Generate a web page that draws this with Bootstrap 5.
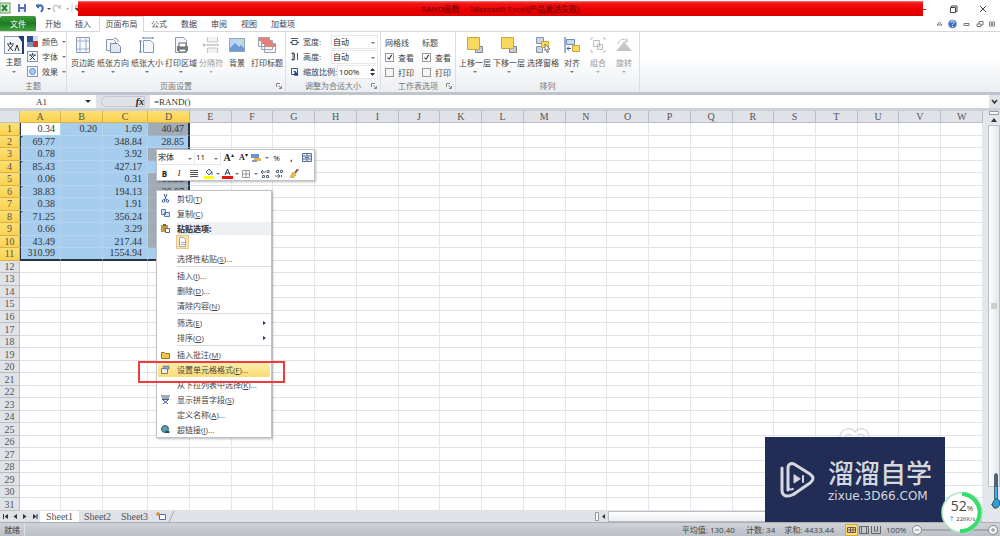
<!DOCTYPE html>
<html lang="zh-CN">
<head>
<meta charset="utf-8">
<meta name="viewport" content="width=device-width, initial-scale=1">
<title>RAND函数 - Microsoft Excel</title>
<link href="https://cdn.jsdelivr.net/npm/bootstrap@5.3.0/dist/css/bootstrap.min.css" rel="stylesheet">
<style>
:root{--ui:"Open Sans","Noto Sans CJK SC",sans-serif;--cell:"Liberation Serif","Noto Sans CJK SC",serif}
body{font-family:var(--ui);font-size:8px;line-height:12px;color:#444;background:#fff;overflow:hidden}
button,input,select{font:inherit;color:inherit;padding:0;border:0;background:none;border-radius:0}
button{line-height:inherit}
svg{display:block;flex:none}
a{color:inherit;text-decoration:none}
.titlebar{height:16px}
.qat{width:78px}
.redbar{background:linear-gradient(#f77 0,#f01818 2px,#e00 8px,#da0000);color:#600;margin:1px 0 0;line-height:15px}
.wincontrols{width:77px}
.tabs{height:16px;border-bottom:1px solid #d5d8dc}
.tabs a{display:block;width:30px;text-align:center;line-height:15px}
.tabs .file{width:36px;background:linear-gradient(#3f9b3c,#1d7a23 50%,#46a53a);color:#fff;border-radius:2px 2px 0 0;margin-right:2px}
.tabs .current{width:45px;height:16px;margin-left:1px;background:#fff;border:1px solid #d5d8dc;border-bottom:0;line-height:14px}
.tabs .wide{width:38px}
.ribbon{height:60px;background:linear-gradient(#fff 40%,#eceef2);border-bottom:0}
.group{border-right:1px solid #dcdfe3;display:flex;flex-direction:column}
.group-body{display:flex;height:48px;padding-top:5px}
.group-name{position:relative;text-align:center;color:#777;line-height:12px}
.group-name svg{position:absolute;right:3px;top:3px}
.big{display:flex;flex-direction:column;align-items:center;white-space:nowrap}
.big span{line-height:11px;margin-top:4px}
.caret{width:0;height:0;border:2px solid transparent;border-top-color:#777;border-bottom:0;margin-top:3px}
.w24{width:24px}.w26{width:26px}.w34{width:34px}.w28{width:28px}
.off{opacity:.55}
.line{display:flex;align-items:center;height:15px;white-space:nowrap}
.pick{width:47px;height:14px;background:#fff;border:1px solid #e6e8eb;padding:0 1px;appearance:none;line-height:12px;color:#222}
.pickbox{position:relative}
.pickbox .caret{position:absolute;right:3px;top:3px}
.tick{appearance:none;width:9px;height:9px;border:1px solid #999;background:#f4f4f4;margin:0 4px 0 0}
.tick:checked{background:#fff url("data:image/svg+xml,%3Csvg xmlns='http://www.w3.org/2000/svg' viewBox='0 0 8 8'%3E%3Cpath d='M1.5 4l2 2 3-5' fill='none' stroke='%23334' stroke-width='1.2'/%3E%3C/svg%3E")}
.formulabar{height:19px;background:#dfe2e7;border-top:3px solid #bfc3cb;border-bottom:3px solid #cdd1d7;font-family:var(--cell);font-size:9px;color:#333}
.namebox{width:96px;background:#fff;position:relative}
.namebox input{width:83px;text-align:center;height:13px}
.namebox .caret{position:absolute;right:5px;top:2px;border-width:3px;border-bottom:0;border-top-color:#333}
.fx{width:54px;background:#dfe2e7;padding-right:5px}
.fx span{width:44px;height:11px;border:1px solid #c4c8ce;border-radius:6px 0 0 6px;font-family:"Liberation Serif",serif;font-style:italic;font-weight:700;font-size:10px;line-height:9px;text-align:right;color:#222}
.fx-input{flex:1;background:#fff}
.sheetarea{min-height:0}
.gridbox{min-width:0}
.grid{table-layout:fixed;width:100%;height:100%;border-collapse:separate;border-spacing:0;font-family:var(--cell);font-size:10px;color:#333}
.grid th,.grid td{padding:0;line-height:11px;font-weight:400;border-right:1px solid #e4e6e9;border-bottom:1px solid #e0e3e6}
.grid td{text-align:right;padding-right:5px;overflow:hidden;position:relative}
.grid th{text-align:center;background:#dfe2e7;border-color:#b9bdc4;color:#555}
.grid thead th{height:12px}
.grid th.hot{background:linear-gradient(#fcdf74,#fbd24e);border-color:#d9b04a}
.grid td.sel{background:#a6cdee;border-color:#b4d3ee}
.grid td.dup{background:#9fabb7;border-color:#a9b4bf}
.grid td.act{background:#fff}
.grid td.edge-r{border-right:2px solid #24344a;padding-right:4px}
.grid td.edge-b{border-bottom:2px solid #24344a;line-height:10px}
.grid td.edge-l{border-left:1px solid #24344a}
.grid td.err::before{content:"";position:absolute;left:0;top:0;border:1px solid;border-color:#2b6b4b transparent transparent #2b6b4b}
.vscroll{width:18px;background:#e3e6ea;padding-left:5px}
.vscroll .thumb{background:linear-gradient(90deg,#fdfdfd,#e4e7eb);border:1px solid #b9bdc4;border-radius:1px}
.sheettabs{height:11px;background:#dfe2e7;font-family:var(--cell);font-size:10px;line-height:11px}
.sheettabs a{width:37px;text-align:center;color:#555}
.sheettabs .on{background:#fff;width:39px}
.nav4{width:40px}
.hscroll{width:406px}
.hscroll .track{background:linear-gradient(#fff,#eceef1);border:1px solid #b9bdc4}
.status{height:14px;background:linear-gradient(#d0d4d9,#bbbfc6);border-top:1px solid #a9adb4;color:#444;line-height:13px}
.status .viewon{background:#fbdc7c;border:1px solid #d9a93a}
.float{position:absolute;background:#fff;border:1px solid #bfc3c8;box-shadow:1px 1px 2px #0004}
.minibar{left:156px;top:149px;width:159px;height:32px;color:#222}
.minibar .rowline{display:flex;align-items:center;height:15px}
.minibar button{flex:1;display:flex;justify-content:center;align-items:center}
.fontname{width:38px}.fontsize{width:26px}
.minibar .pick{width:100%;border-width:0 1px 1px 0}
.ctx{left:156px;top:190px;width:116px;font-size:8px;line-height:15px}
.ctx a,.ctx .cap{display:flex;align-items:center;height:15px;padding-left:2px}
.ctx .ico{width:18px;display:flex;padding-left:2px}
.ctx .cap{height:14px;font-weight:700}
.ctx .cap b{flex:1;background:#eef0f3;line-height:13px}
.ctx .pasteopt{height:16px;padding-left:19px}
.ctx .pasteopt button{width:13px;height:14px;background:#f8e4b6;border:1px solid #e8c98a;display:flex;align-items:center;justify-content:center}
.ctx hr{margin:0 0 1px 20px;border-top:1px solid #d8dbdf;opacity:1}
.ctx .hover{background:linear-gradient(#fdeeb0,#f9dc74);margin:0 1px;padding-left:1px;border-radius:1px}
.ctx .sub::after{content:"";border:2px solid transparent;border-left:3px solid #223a70;margin-left:auto;margin-right:3px}
.callout{position:absolute;left:138px;top:361px;width:147px;height:22px;border:2px solid #ee3b3b}
.brand{position:absolute;right:55px;bottom:14px;width:180px;height:85px;background:#222d55;color:#d5d8de;gap:9px;padding-left:15px}
.brand .cn{font-size:26px;line-height:32px;font-weight:500}
.brand .en{font-family:"DejaVu Sans",sans-serif;font-size:12px;line-height:14px}
.bunny{position:absolute;right:126px;bottom:99px}
.gauge{position:absolute;right:13px;bottom:0;width:47px;height:47px}
.gauge p{position:absolute;left:4px;top:9px;width:36px;text-align:center;font-size:14px;line-height:16px;color:#444;margin:0}
.gauge small{font-size:8px}
.gauge em{position:absolute;left:4px;top:26px;width:36px;text-align:center;font-style:normal;font-size:6px;line-height:8px;white-space:nowrap}
.thermo{position:absolute;right:0;bottom:26px}
</style>
</head>
<body>
<div class="d-flex flex-column vh-100 position-relative">

  <header class="titlebar d-flex">
    <div class="qat d-flex align-items-center">
      <svg width="12" height="12" viewBox="0 0 12 12"><rect x="0" y="1" width="10" height="10" fill="#dff0dc" stroke="#5a9a58"/><path d="M2 3l5 6M7 3L2 9" stroke="#2c8a2e" stroke-width="2"/></svg>
      <svg class="ms-1 me-2" width="12" height="12" viewBox="0 0 12 12"><path d="M2 2h8v8H2z" fill="#5b6fc0"/><path d="M4 2h4v3H4z" fill="#fff"/><path d="M4 7h4v3H4z" fill="#dfe6f8"/></svg>
      <svg width="44" height="12" viewBox="0 0 44 12"><path d="M1 5c4-4 8 0 4 5" fill="none" stroke="#3f64b8" stroke-width="2"/><path d="M-1 3l4-1v5z" fill="#3f64b8"/><path d="M11 6h4l-2 2z" fill="#555"/><path d="M23 5c-4-4-8 0-4 5" fill="none" stroke="#c5c8cc" stroke-width="1.5"/><path d="M25 2v5l-4-1z" fill="#c5c8cc"/><path d="M30 6h3l-1 2z" fill="#aaa"/><path d="M36 1v10" stroke="#d0d0d0"/><path d="M39 4h5M39 6h5l-2.500 3z" stroke="#444" stroke-width=".6" fill="#444"/></svg>
    </div>
    <div class="redbar flex-grow-1 text-center">RAND函数&nbsp; - &nbsp;Microsoft Excel(产品激活失败)</div>
    <div class="wincontrols d-flex align-items-center">
      <svg width="77" height="16" viewBox="0 0 77 16" fill="none" stroke="#444"><path d="M0 9.500h3"/><path d="M27.500 7.500h5v5h-5zM28.500 7V6h5.500v5.500h-1"/><path d="M57 6l6 6M63 6l-6 6"/></svg>
    </div>
  </header>

  <nav class="tabs d-flex">
    <a href="#" class="file">文件</a><a href="#">开始</a><a href="#">插入</a><a href="#" class="current">页面布局</a><a href="#">公式</a><a href="#">数据</a><a href="#">审阅</a><a href="#">视图</a><a href="#" class="wide">加载项</a>
    <svg class="ms-auto me-1" width="62" height="14" viewBox="0 0 62 14" fill="none" stroke="#777"><path d="M3 9l2.500-3L8 9z"/><circle cx="18.500" cy="8" r="4" fill="#3d6fc4" stroke="#7d9bd0"/><path d="M17 6.500c0-2 3-2 3 0 0 1-1.500 1-1.500 2.200M18.500 10v1" stroke="#fff"/><path d="M30 7.500h5v2h-5zM43 8h4v2.500h-4zM45 8V5.500h4V9h-2M55.500 6h5v4h-5zM57 7l2 2m0-2l-2 2"/></svg>
  </nav>

  <section class="ribbon d-flex">
    <div class="group" style="width:67px">
      <div class="group-body" style="padding-top:2px">
        <button class="big" style="width:28px;padding-left:2px"><svg width="22" height="22" viewBox="0 0 22 20"><rect x="1.500" y="1.500" width="18" height="17" fill="#f3f6fa" stroke="#8d9ab0"/><path d="M15 1h6v18h-2V7z" fill="#243a78"/><path d="M4 9h7M7.500 7v2M5 16l5-6M5 10l5 6M12 16l2-6 2 6" stroke="#333" fill="none"/></svg><span class="mt-0">主题</span><i class="caret mt-1"></i></button>
        <div style="padding-left:2px">
          <button class="line"><svg class="me-1" width="11" height="11" viewBox="0 0 11 11"><path d="M0 0h6v6H0z" fill="#2f4d86"/><path d="M6 0h5v6H6z" fill="#d8dde8"/><path d="M0 6h6v5H0z" fill="#7b94bd"/><path d="M6 5h5v6H6z" fill="#c33c35"/></svg>颜色<i class="caret ms-1 mt-0"></i></button>
          <button class="line"><svg class="me-1" width="11" height="11" viewBox="0 0 11 11" fill="none" stroke="#345"><rect x=".5" y=".5" width="10" height="10" fill="#f5f8fc" stroke="#8796b4"/><path d="M2 4h7M5.500 2v2M3 9l5-5M3 4l5 5"/></svg>字体<i class="caret ms-1 mt-0"></i></button>
          <button class="line"><svg class="me-1" width="11" height="11" viewBox="0 0 11 11"><rect x=".5" y=".5" width="10" height="10" fill="#f5f8fc" stroke="#8796b4"/><circle cx="5.500" cy="5.500" r="3" fill="#a8cbf2" stroke="#5f8cc8"/></svg>效果<i class="caret ms-1 mt-0"></i></button>
        </div>
      </div>
      <div class="group-name">主题</div>
    </div>

    <div class="group" style="width:219px">
      <div class="group-body" style="padding-left:3px">
        <button class="big w26"><svg width="16" height="16" viewBox="0 0 16 16"><path d="M1.500 .5h13v15h-13z" fill="#f7f9fc" stroke="#8a98ad"/><path d="M5 0v16M11 0v16M1 4h14M1 12h14" stroke="#9db1cf"/></svg><span>页边距</span><i class="caret"></i></button>
        <button class="big w34"><svg width="16" height="16" viewBox="0 0 16 16"><path d="M1.500 2.500h7l2 2v9h-9z" fill="#f2f5fa" stroke="#8a98ad"/><path d="M5.500 6.500h7l3 3v6h-10z" fill="#dfe8f4" stroke="#7a8caa"/><path d="M9 1c3 0 4 2 4 4" stroke="#7a8caa" fill="none"/></svg><span>纸张方向</span><i class="caret"></i></button>
        <button class="big w34"><svg width="16" height="16" viewBox="0 0 16 16"><path d="M4.500 3.500h7l3 3v9h-10z" fill="#f4f7fb" stroke="#8a98ad"/><path d="M4 1h10M1.500 4v11M4 0v2M14 0v2M0 4h3M0 15h3" stroke="#5d7fb4"/></svg><span>纸张大小</span><i class="caret"></i></button>
        <button class="big w34"><svg width="16" height="16" viewBox="0 0 16 16"><path d="M2.500 .5h8l3 3v12h-11z" fill="#f2f5fa" stroke="#8a98ad"/><path d="M4 9h11v5H4z" fill="#777f8c"/><path d="M6 6h7v4H6zM6 12h7v3H6z" fill="#fff" stroke="#666"/></svg><span>打印区域</span><i class="caret"></i></button>
        <button class="big w26 off"><svg width="16" height="16" viewBox="0 0 16 16"><path d="M4.500 0v5h10V0M4.500 16v-5h10v5" fill="#e8e8e8" stroke="#999"/><path d="M3 8h13" stroke="#aaa" stroke-width="2"/><path d="M0 6l3 2-3 2z" fill="#888"/></svg><span>分隔符</span><i class="caret"></i></button>
        <button class="big w26"><svg width="16" height="16" viewBox="0 0 16 16"><rect x=".5" y="1.500" width="15" height="13" fill="#b9d5f2" stroke="#90a4c0"/><path d="M1 11l5-5 4 4 2-2 3 3v3H1z" fill="#6b9bd2"/><circle cx="11" cy="5" r="1.500" fill="#f5dc8a"/></svg><span>背景</span></button>
        <button class="big w34"><svg width="18" height="16" viewBox="0 0 18 16"><path d="M.5 .5h11v9H.5zM3.500 3.500h11v9h-11zM6.500 6.500h11v9h-11z" fill="#f4f6fa" stroke="#98a3b4"/><path d="M1 1h10v3H1zM4 4h10v3H4zM7 7h10v3H7z" fill="#e98078"/></svg><span>打印标题</span></button>
      </div>
      <div class="group-name">页面设置<svg width="6" height="6" viewBox="0 0 6 6" fill="none" stroke="#888"><path d="M.5 4V.5H4M2.500 2.500l3 3M5.500 3v2.500H3"/></svg></div>
    </div>

    <div class="group" style="width:95px">
      <div class="group-body flex-column" style="padding:2px 2px 0 4px">
        <div class="line"><svg class="me-1" width="9" height="9" viewBox="0 0 9 9" fill="none" stroke="#456"><path d="M1 1.500h7M2 3.500v4h5v-4zM0 5.500h2M7 5.500h2"/></svg><label for="pw">宽度:</label><div class="pickbox ms-auto"><select id="pw" class="pick"><option>自动</option></select><i class="caret mt-1"></i></div></div>
        <div class="line"><svg class="me-1" width="9" height="9" viewBox="0 0 9 9" fill="none" stroke="#456"><path d="M7.500 1v7M1.500 1.500h3v6h-3M3 0v9"/></svg><label for="ph">高度:</label><div class="pickbox ms-auto"><select id="ph" class="pick"><option>自动</option></select><i class="caret mt-1"></i></div></div>
        <div class="line"><svg class="me-1" width="9" height="9" viewBox="0 0 9 9" fill="none" stroke="#456"><path d="M1.500 1.500h6v6h-6z"/><path d="M4 4l4 4M5 4v4h3" stroke="#27488c" stroke-width="1.500"/></svg><label for="sc">缩放比例:</label><div class="pickbox ms-auto"><input id="sc" class="pick" style="width:41px" value="100%"><svg style="position:absolute;right:3px;top:3px" width="5" height="8" viewBox="0 0 5 8"><path d="M0 3l2.500-3L5 3zM0 5l2.500 3L5 5z" fill="#333"/></svg></div></div>
      </div>
      <div class="group-name">调整为合适大小<svg width="6" height="6" viewBox="0 0 6 6" fill="none" stroke="#888"><path d="M.5 4V.5H4M2.500 2.500l3 3M5.500 3v2.500H3"/></svg></div>
    </div>

    <div class="group" style="width:75px">
      <div class="group-body" style="padding:3px 0 0 4px">
        <div style="width:37px"><div class="line">网格线</div>
          <label class="line"><input type="checkbox" class="tick" checked>查看</label>
          <label class="line"><input type="checkbox" class="tick">打印</label></div>
        <div><div class="line">标题</div>
          <label class="line"><input type="checkbox" class="tick" checked>查看</label>
          <label class="line"><input type="checkbox" class="tick">打印</label></div>
      </div>
      <div class="group-name">工作表选项<svg width="6" height="6" viewBox="0 0 6 6" fill="none" stroke="#888"><path d="M.5 4V.5H4M2.500 2.500l3 3M5.500 3v2.500H3"/></svg></div>
    </div>

    <div class="group" style="width:184px">
      <div class="group-body" style="padding-left:2px">
        <button class="big w34"><svg width="16" height="16" viewBox="0 0 16 16"><path d="M8.500 9.500h7v6h-7z" fill="#c9ced6" stroke="#7d8794"/><path d="M.5 .5h12v12H.5z" fill="#f7d960" stroke="#c9a63b"/></svg><span>上移一层</span><i class="caret"></i></button>
        <button class="big w34"><svg width="16" height="16" viewBox="0 0 16 16"><path d="M8.500 9.500h7v6h-7z" fill="#c9ced6" stroke="#7d8794"/><path d="M.5 .5h12v11H.5z" fill="#f7d960" stroke="#c9a63b"/></svg><span>下移一层</span><i class="caret"></i></button>
        <button class="big w34"><svg width="16" height="16" viewBox="0 0 16 16"><path d="M1.500 .5h7v6h-7zM1.500 9.500h6v6h-6z" fill="#cfd5de" stroke="#8792a3"/><path d="M6.500 4.500h7v6h-7z" fill="#f7d960" stroke="#c9a63b"/><path d="M10 7l5 5h-2.500l1 3-1.500.5-1-3-1 1z" fill="#fff" stroke="#777"/></svg><span>选择窗格</span></button>
        <button class="big w24"><svg width="16" height="16" viewBox="0 0 16 16"><path d="M1 0v16" stroke="#3d5ea2"/><path d="M2.500 2.500h8v5h-8z" fill="#cbd9ec" stroke="#6f8ab5"/><path d="M8.500 8.500h7v6h-7z" fill="#f7d960" stroke="#c9a63b"/><path d="M3 11.500h4M3 11.500l2-2M3 11.500l2 2" stroke="#3d5ea2" fill="none"/></svg><span>对齐</span><i class="caret"></i></button>
        <button class="big w28 off"><svg width="16" height="16" viewBox="0 0 16 16" fill="#eee" stroke="#888"><path d="M3.500 3.500h6v6h-6zM7.500 7.500h5v5h-5z"/><path d="M1 3V1h2M13 1h2v2M15 13v2h-2M3 15H1v-2" fill="none"/></svg><span>组合</span><i class="caret"></i></button>
        <button class="big w24 off"><svg width="18" height="16" viewBox="0 0 18 16"><path d="M1 14l8-9 8 9z" fill="#999"/><path d="M3 7c1-5 6-6 9-3M12 1v4H8" stroke="#888" fill="none"/></svg><span>旋转</span><i class="caret"></i></button>
      </div>
      <div class="group-name">排列</div>
    </div>
  </section>

  <div class="formulabar d-flex">
    <div class="namebox"><input aria-label="名称框" value="A1"><i class="caret"></i></div>
    <div class="fx d-flex align-items-center justify-content-end"><span>fx</span></div>
    <input class="fx-input ps-1" aria-label="编辑栏" value="=RAND()">
    <button class="d-flex align-items-center justify-content-center" style="width:11px" aria-label="展开"><svg width="7" height="6" viewBox="0 0 7 6"><path d="M1 1l2.500 3L6 1" fill="none" stroke="#333" stroke-width="1.500"/></svg></button>
  </div>

  <main class="sheetarea d-flex flex-grow-1">
    <div class="gridbox flex-grow-1"><table class="grid"><colgroup id="cols"></colgroup><thead id="head"></thead><tbody id="rows"></tbody></table></div>
    <div class="vscroll d-flex flex-column align-items-stretch">
      <svg width="12" height="14" viewBox="0 0 12 14"><path d="M1.500 .5h9v3h-9z" fill="#fff" stroke="#999"/><path d="M3 11l3-4 3 4z" fill="#333"/></svg>
      <div class="thumb flex-grow-1 d-flex align-items-center justify-content-center"><svg width="6" height="6" viewBox="0 0 6 6"><path d="M0 1h6M0 3h6M0 5h6" stroke="#999" stroke-width=".8"/></svg></div>
      <div style="height:14px"></div>
      <svg width="12" height="10" viewBox="0 0 12 10"><path d="M3 3h6l-3 4z" fill="#333"/></svg>
    </div>
  </main>

  <div class="sheettabs d-flex">
    <svg class="nav4" height="11" viewBox="0 0 40 11" fill="#333"><path d="M3 3h1v5H3zM8 3v5L4.500 5.500zM17 3v5l-3.500-2.500zM23 3v5l3.500-2.500zM33 3v5l3.500-2.500zM36.500 3h1v5h-1z"/></svg>
    <a href="#" class="on">Sheet1</a><a href="#">Sheet2</a><a href="#">Sheet3</a>
    <svg width="22" height="11" viewBox="0 0 22 11" fill="none"><path d="M6.500 3.500h6v5h-6z" fill="#fff" stroke="#4f6fa8"/><path d="M3 3h4M5 1v4" stroke="#e08b2c" stroke-width="1.500"/><path d="M16 11l5-11" stroke="#aaa"/></svg>
    <div class="hscroll ms-auto d-flex"><svg width="14" height="11" viewBox="0 0 14 11"><path d="M1.500 1.500h3v8h-3z" fill="#fff" stroke="#999"/><path d="M11 3v5L8 5.500z" fill="#333"/></svg><div class="track flex-grow-1"></div><div class="vscroll"></div></div>
  </div>

  <footer class="status d-flex align-items-center">
    <span class="ps-1 pe-1 border-end">就绪</span>
    <span class="ms-auto" style="margin-right:11px">平均值: 130.40</span><span style="margin-right:9px">计数: 34</span><span style="margin-right:11px">求和: 4433.44</span>
    <button class="viewon" aria-label="普通"><svg width="11" height="10" viewBox="0 0 11 10" fill="none" stroke="#655"><path d="M1.500 2.500h8v5h-8zM1 5h9M4.500 2v6M7 2v6"/></svg></button>
    <button aria-label="页面布局"><svg width="12" height="10" viewBox="0 0 12 10" fill="none" stroke="#666"><path d="M1.500 1.500h9v7h-9zM3.500 2v6M8.500 2v6"/></svg></button>
    <button class="me-1" aria-label="分页预览"><svg width="12" height="10" viewBox="0 0 12 10" fill="none" stroke="#666"><path d="M1.500 1v7.500h9V1M4.500 1v5h3V1"/></svg></button>
    <span style="width:24px">100%</span>
    <svg width="90" height="12" viewBox="0 0 90 12" fill="#f1f2f4" stroke="#888"><circle cx="7" cy="6" r="4.500"/><path d="M5 6h4M12 6h66"/><circle cx="83" cy="6" r="4.500"/><path d="M81 6h4M83 4v4"/></svg>
  </footer>

  <div class="float minibar">
    <div class="rowline">
      <div class="pickbox fontname"><select class="pick" aria-label="字体"><option>宋体</option></select><i class="caret mt-1"></i></div>
      <div class="pickbox fontsize"><select class="pick" aria-label="字号"><option>11</option></select><i class="caret mt-1"></i></div>
      <button><b style="font-family:'Liberation Serif',serif;font-size:10px">A</b><sup>▴</sup></button>
      <button><b style="font-family:'Liberation Serif',serif">A</b><sup>▾</sup></button>
      <button><svg width="10" height="10" viewBox="0 0 10 10"><path d="M0 1h8v4H0z" fill="#6c92cf"/><path d="M3 5h7v3H3z" fill="#e4b842"/><path d="M1 7h5v2H1z" fill="#8b9ab0"/></svg><i class="caret mt-0 ms-1"></i></button>
      <button>%</button><button><b>,</b></button>
      <button><svg width="10" height="9" viewBox="0 0 10 9" fill="#dfe8f6" stroke="#5d7299"><path d="M.5 .5h9v8h-9zM.5 3h9M.5 6h9M5 0v3M5 6v3M3 4.500h4"/></svg></button>
    </div>
    <div class="rowline" style="height:17px">
      <button><b>B</b></button><button><i style="font-family:'Liberation Serif',serif">I</i></button>
      <button><svg width="8" height="8" viewBox="0 0 8 8"><path d="M0 .5h8M0 2.500h8M0 4.500h8M0 6.500h8" stroke="#555"/></svg></button>
      <button><svg width="10" height="11" viewBox="0 0 10 11"><path d="M2 4l3-3 3 3-3 3z" fill="#dce4f0" stroke="#667"/><path d="M8 4v3" stroke="#46a"/><path d="M0 8h10v3H0z" fill="#ff0"/></svg></button><i class="caret mt-0"></i>
      <button><svg width="11" height="11" viewBox="0 0 11 11"><path d="M3 7l2.500-6L8 7M4 5h3" fill="none" stroke="#345"/><path d="M0 8h11v3H0z" fill="#e81010"/></svg></button><i class="caret mt-0"></i>
      <button><svg width="8" height="8" viewBox="0 0 8 8" fill="none" stroke="#999"><path d="M.5 .5h7v7h-7zM4 0v8M0 4h8"/></svg></button><i class="caret mt-0"></i>
      <button><svg width="9" height="8" viewBox="0 0 9 8" fill="none" stroke="#567"><path d="M1 2h4M2 0L0 2l2 2M6 .5h2v2H6zM1.500 5.500h2v2h-2zM5.500 5.500h2v2h-2z"/></svg></button>
      <button><svg width="9" height="8" viewBox="0 0 9 8" fill="none" stroke="#567"><path d="M0 6h4M3 4l2 2-2 2M1.500 .5h2v2h-2zM5.500 .5h2v2h-2zM6.500 5v2"/></svg></button>
      <button><svg width="9" height="9" viewBox="0 0 9 9"><path d="M8 0L5 4" stroke="#8a5a2a" stroke-width="2"/><path d="M3 3l3 3-3 3-3-1z" fill="#f0bd45" stroke="#9a7a35" stroke-width=".5"/></svg></button><span style="width:12px"></span>
    </div>
  </div>

  <div class="float ctx">
    <a href="#"><span class="ico"><svg width="9" height="9" viewBox="0 0 9 9" fill="none" stroke="#3b5ba0"><path d="M3 0l2.500 6M6 0L3.500 6"/><circle cx="2.500" cy="7" r="1.300"/><circle cx="6.500" cy="7" r="1.300"/></svg></span><span>剪切(<u>T</u>)</span></a>
    <a href="#"><span class="ico"><svg width="9" height="9" viewBox="0 0 9 9" fill="#dbe7f8" stroke="#5577b5"><path d="M.5 .5h4v5h-4zM3.500 3.500h5v4h-5z"/></svg></span><span>复制(<u>C</u>)</span></a>
    <div class="cap"><span class="ico"><svg width="9" height="9" viewBox="0 0 9 9"><path d="M0 1h7v7H0z" fill="#c99740"/><path d="M2 0h3v2H2z" fill="#666"/><path d="M4.500 4.500h4v4h-4z" fill="#fff" stroke="#667"/></svg></span><b>粘贴选项:</b></div>
    <div class="pasteopt"><button aria-label="粘贴"><svg width="9" height="10" viewBox="0 0 9 10"><path d="M1.500 .5h4l2 2v7h-6z" fill="#fff" stroke="#a3a9b4"/><path d="M3 5.500h4M3 7.500h4" stroke="#9fb1cd"/></svg></button></div>
    <a href="#"><span class="ico"></span><span>选择性粘贴(<u>S</u>)...</span></a>
    <hr>
    <a href="#"><span class="ico"></span><span>插入(<u>I</u>)...</span></a>
    <a href="#"><span class="ico"></span><span>删除(<u>D</u>)...</span></a>
    <a href="#"><span class="ico"></span><span>清除内容(<u>N</u>)</span></a>
    <hr>
    <a href="#" class="sub"><span class="ico"></span><span>筛选(<u>E</u>)</span></a>
    <a href="#" class="sub"><span class="ico"></span><span>排序(<u>O</u>)</span></a>
    <hr>
    <a href="#"><span class="ico"><svg width="9" height="8" viewBox="0 0 9 8"><path d="M.5 1.500h3l1 1h4v5h-8z" fill="#f2c84b" stroke="#9a7420"/></svg></span><span>插入批注(<u>M</u>)</span></a>
    <a href="#" class="hover"><span class="ico"><svg width="9" height="9" viewBox="0 0 9 9"><path d="M.5 3.500h6v5h-6z" fill="#eef2f8" stroke="#778"/><path d="M2 1h6v3H3z" fill="#8ea2c4" stroke="#667" stroke-width=".6"/></svg></span><span>设置单元格格式(<u>F</u>)...</span></a>
    <a href="#"><span class="ico"></span><span>从下拉列表中选择(<u>K</u>)...</span></a>
    <a href="#"><span class="ico"><svg width="9" height="9" viewBox="0 0 9 9" fill="none" stroke="#3c5a9c"><path d="M0 1h9M1 3h7" stroke="#456"/><path d="M1 4.500h7M2 9l5-4M2 5l5 4"/></svg></span><span>显示拼音字段(<u>S</u>)</span></a>
    <a href="#"><span class="ico"></span><span>定义名称(<u>A</u>)...</span></a>
    <a href="#"><span class="ico"><svg width="9" height="9" viewBox="0 0 9 9"><circle cx="4" cy="4" r="3.500" fill="#5b93b8" stroke="#356b7d"/><path d="M2 2l3 1-1 3z" fill="#6fb26a"/><path d="M4.500 7h4" stroke="#345" stroke-width="2"/></svg></span><span>超链接(<u>I</u>)...</span></a>
  </div>
  <div class="callout"></div>

  <svg class="bunny" width="36" height="10" viewBox="0 0 36 10" fill="none" stroke="#ddd" stroke-width="1.500"><path d="M2 10C3 0 14 0 17 5c3-5 13-5 14 5M8 10c0-3 4-4 6-1M20 9c2-3 6-2 6 1"/></svg>
  <div class="brand d-flex align-items-center">
    <svg width="35" height="36" viewBox="0 0 35 36" fill="none" stroke="#d5d8de" stroke-width="3" stroke-linecap="round" stroke-linejoin="round"><path d="M8 28V6c0-4 3-5 6-4l16 10c4 3 4 6 0 9L14 32"/><path d="M2 6v22c0 6 5 8 12 4"/><path d="M8 5v19c0 3 2 4 5 3" stroke-width="2"/><path d="M14 13v8l6-4z" fill="#d5d8de" stroke-width="1"/><path d="M23 14v6" stroke-width="2"/></svg>
    <div class="ms-1"><div class="cn">溜溜自学</div><div class="en">zixue.3D66.COM</div></div>
  </div>
  <svg class="thermo" width="8" height="38" viewBox="0 0 8 38"><path d="M2 3q2-4 4 0v24H2z" fill="#4d6478"/><path d="M3 15h2v14H3z" fill="#35b5e8"/><path d="M0 32l3-5q4-1 5 4-1 6-6 5z" fill="#2b9fd6" stroke="#33586e"/></svg>
  <div class="gauge">
    <svg width="47" height="47" viewBox="0 0 47 47" fill="none"><circle cx="22" cy="23.500" r="20" fill="#fff" stroke="#a9e8bd" stroke-width="1.500"/><path d="M22 5a18.500 18.500 0 0 1 -2 37" stroke="#37dc6b" stroke-width="4"/></svg>
    <p>52<small>%</small></p><em><span class="text-primary">↑</span> 226K/s</em>
  </div>
</div>

<script src="https://cdn.jsdelivr.net/npm/bootstrap@5.3.0/dist/js/bootstrap.bundle.min.js"></script>
<script>
const values = [
  ['0.34','0.20','1.69','40.47'],['69.77','','348.84','28.85'],['0.78','','3.92',''],
  ['85.43','','427.17',''],['0.06','','0.31','60.85'],['38.83','','194.13','20.07'],
  ['0.38','','1.91',''],['71.25','','356.24',''],['0.66','','3.29',''],
  ['43.49','','217.44',''],['310.99','','1554.94','']
];
const repeated = [0,2,4,5,6,7,8,9];
const letters = 'ABCDEFGHIJKLMNOPQRSTUVW'.split('');
const widths = [20,41,42,45,42];
document.getElementById('cols').innerHTML = [''].concat(letters)
  .map((_, i) => widths[i] ? `<col style="width:${widths[i]}px">` : '<col>').join('');
document.getElementById('head').innerHTML = '<tr><th></th>' +
  letters.map((l, i) => `<th class="${i < 4 ? 'hot' : ''}">${l}</th>`).join('') + '</tr>';
let html = '';
for (let r = 0; r < 31; r++) {
  html += `<tr><th class="${r < 11 ? 'hot' : ''}">${r + 1}</th>`;
  letters.forEach((_, c) => {
    const cls = [];
    if (r < 11 && c < 4) {
      cls.push('sel');
      if (r === 0 && c === 0) cls.push('act');
      if (c === 0) cls.push('edge-l');
      if (c === 0 && [1,3,5,7].includes(r)) cls.push('err');
      if (c === 3 && repeated.includes(r)) cls.push('dup');
      if (c === 3) cls.push('edge-r');
      if (r === 10) cls.push('edge-b');
    }
    html += `<td class="${cls.join(' ')}">${(values[r] || [])[c] || ''}</td>`;
  });
  html += '</tr>';
}
document.getElementById('rows').innerHTML = html;
</script>
</body>
</html>
